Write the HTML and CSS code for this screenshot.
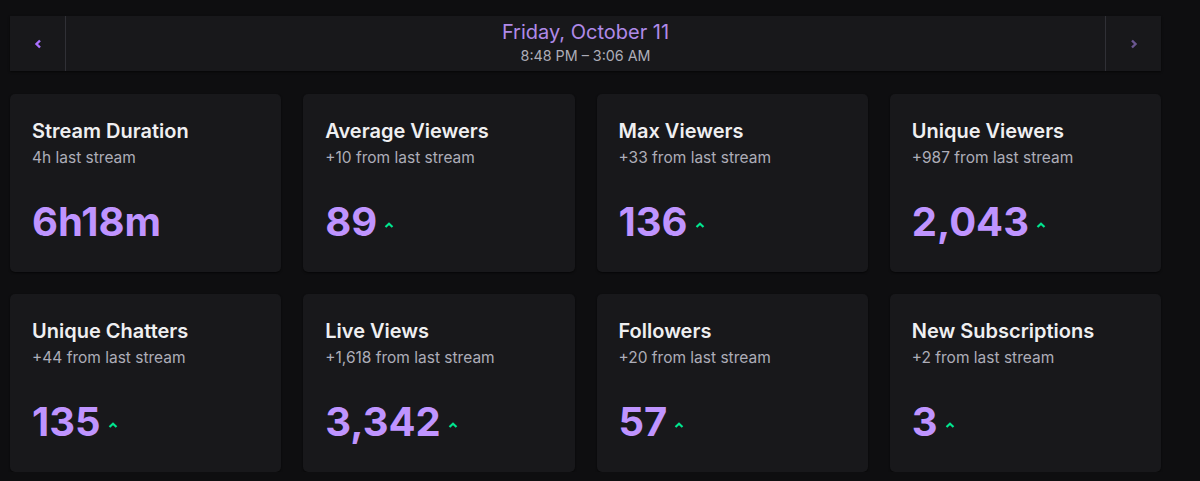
FILE: index.html
```html
<!DOCTYPE html>
<html lang="en">
<head>
    <meta charset="UTF-8">
    <meta name="viewport" content="width=device-width, initial-scale=1.0">
    <title>Stream Summary</title>
    <link rel="stylesheet" href="styles.css">
</head>
<body>
    <div class="container">
        <div class="date-bar">
            <button class="nav-btn">
                <svg width="8" height="10" viewBox="0 0 8 10"><path d="M6 1.5L2.5 5L6 8.5" fill="none" stroke="currentColor" stroke-width="2.4"/></svg>
            </button>
            <div class="date-info">
                <div class="date-title">Friday, October 11</div>
                <div class="date-time">8:48 PM – 3:06 AM</div>
            </div>
            <button class="nav-btn disabled">
                <svg width="8" height="10" viewBox="0 0 8 10"><path d="M2 1.5L5.5 5L2 8.5" fill="none" stroke="currentColor" stroke-width="2.4"/></svg>
            </button>
        </div>

        <div class="stats-grid">
            <div class="stat-card">
                <div class="stat-title">Stream Duration</div>
                <div class="stat-sub">4h last stream</div>
                <div class="stat-value"><span>6h18m</span></div>
            </div>
            <div class="stat-card">
                <div class="stat-title">Average Viewers</div>
                <div class="stat-sub">+10 from last stream</div>
                <div class="stat-value"><span>89</span><svg class="up" width="10" height="6" viewBox="0 0 10 6"><path d="M1.5 5L5 1.7L8.5 5" fill="none" stroke="currentColor" stroke-width="2.2"/></svg></div>
            </div>
            <div class="stat-card">
                <div class="stat-title">Max Viewers</div>
                <div class="stat-sub">+33 from last stream</div>
                <div class="stat-value"><span>136</span><svg class="up" width="10" height="6" viewBox="0 0 10 6"><path d="M1.5 5L5 1.7L8.5 5" fill="none" stroke="currentColor" stroke-width="2.2"/></svg></div>
            </div>
            <div class="stat-card">
                <div class="stat-title">Unique Viewers</div>
                <div class="stat-sub">+987 from last stream</div>
                <div class="stat-value"><span>2,043</span><svg class="up" width="10" height="6" viewBox="0 0 10 6"><path d="M1.5 5L5 1.7L8.5 5" fill="none" stroke="currentColor" stroke-width="2.2"/></svg></div>
            </div>
            <div class="stat-card">
                <div class="stat-title">Unique Chatters</div>
                <div class="stat-sub">+44 from last stream</div>
                <div class="stat-value"><span>135</span><svg class="up" width="10" height="6" viewBox="0 0 10 6"><path d="M1.5 5L5 1.7L8.5 5" fill="none" stroke="currentColor" stroke-width="2.2"/></svg></div>
            </div>
            <div class="stat-card">
                <div class="stat-title">Live Views</div>
                <div class="stat-sub">+1,618 from last stream</div>
                <div class="stat-value"><span>3,342</span><svg class="up" width="10" height="6" viewBox="0 0 10 6"><path d="M1.5 5L5 1.7L8.5 5" fill="none" stroke="currentColor" stroke-width="2.2"/></svg></div>
            </div>
            <div class="stat-card">
                <div class="stat-title">Followers</div>
                <div class="stat-sub">+20 from last stream</div>
                <div class="stat-value"><span>57</span><svg class="up" width="10" height="6" viewBox="0 0 10 6"><path d="M1.5 5L5 1.7L8.5 5" fill="none" stroke="currentColor" stroke-width="2.2"/></svg></div>
            </div>
            <div class="stat-card">
                <div class="stat-title">New Subscriptions</div>
                <div class="stat-sub">+2 from last stream</div>
                <div class="stat-value"><span>3</span><svg class="up" width="10" height="6" viewBox="0 0 10 6"><path d="M1.5 5L5 1.7L8.5 5" fill="none" stroke="currentColor" stroke-width="2.2"/></svg></div>
            </div>
        </div>
    </div>
</body>
</html>
```

FILE: styles.css
```css
body {
    font-family: Inter, "Noto Sans", sans-serif;
    margin: 0;
    padding: 0;
    background-color: #0e0e10;
    color: #efeff1;
}

.container {
    width: 1151px;
    padding: 16px 0 0 10px;
}

.date-bar {
    display: flex;
    height: 55px;
    background-color: #18181b;
    box-shadow: 0 1px 2px rgba(0, 0, 0, 0.6);
}

.nav-btn {
    width: 56px;
    flex-shrink: 0;
    display: flex;
    align-items: center;
    justify-content: center;
    background: none;
    border: none;
    padding: 0;
    color: #a970ff;
}

.nav-btn:first-child {
    border-right: 1px solid #303036;
}

.nav-btn:last-child {
    border-left: 1px solid #303036;
}

.nav-btn.disabled {
    color: #6a5690;
}

.date-info {
    flex: 1;
    display: flex;
    flex-direction: column;
    align-items: center;
    padding-top: 4px;
}

.date-title {
    font-size: 20px;
    line-height: 24px;
    color: #b08ae8;
}

.date-time {
    font-size: 14.3px;
    line-height: 18px;
    margin-top: 3px;
    color: #adadb8;
}

.stats-grid {
    display: grid;
    grid-template-columns: repeat(4, 1fr);
    gap: 22px;
    margin-top: 23px;
}

.stat-card {
    height: 178px;
    box-sizing: border-box;
    padding: 25px 22px 0;
    background-color: #18181b;
    border-radius: 5px;
    box-shadow: 0 1px 2px rgba(0, 0, 0, 0.6);
}

.stat-title {
    font-size: 20px;
    font-weight: 600;
    line-height: 24px;
    color: #efeff1;
}

.stat-sub {
    font-size: 15.5px;
    line-height: 20px;
    color: #adadb8;
    margin-top: 5px;
}

.stat-value {
    display: flex;
    align-items: center;
    margin-top: 29px;
    font-size: 40px;
    font-weight: 700;
    line-height: 50px;
    color: #bf94ff;
}

.up {
    color: #00e58e;
    margin-left: 7px;
    margin-top: 5px;
}
```
